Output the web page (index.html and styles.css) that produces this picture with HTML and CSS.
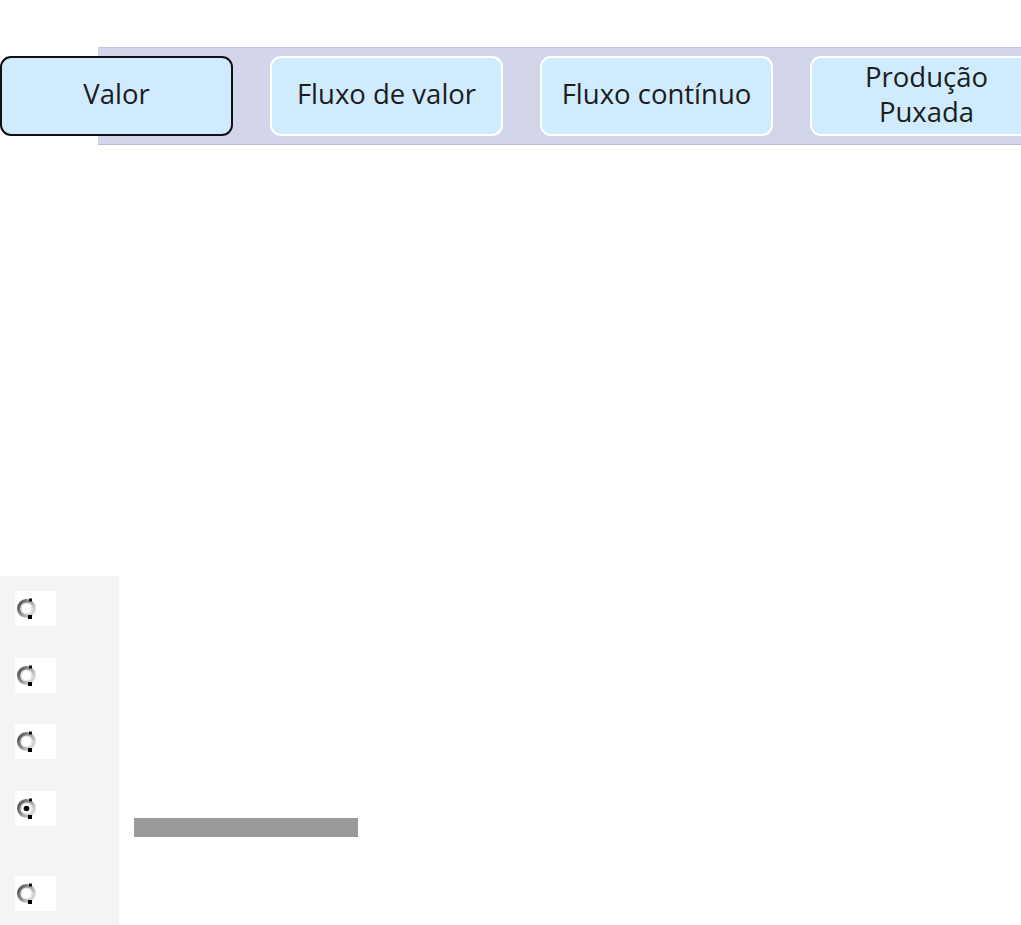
FILE: index.html
```html
<!DOCTYPE html>
<html lang="pt">
<head>
<meta charset="utf-8">
<title>Lean</title>
<link rel="stylesheet" href="styles.css">
</head>
<body>
<div class="page">
  <div class="band-wrap">
    <div class="band">
      <div class="steps">
        <div class="step step-active">Valor</div>
        <div class="step">Fluxo de valor</div>
        <div class="step">Fluxo contínuo</div>
        <div class="step">Produção<br>Puxada</div>
      </div>
    </div>
  </div>

  <div class="options">
    <div class="opt">
      <div class="opt-radio"><span class="radio-box"><svg class="radio" viewBox="0 0 20 21" width="20" height="21"><defs><linearGradient id="g1" x1="0" y1="0.2" x2="1" y2="0.8"><stop offset="0" stop-color="#555"/><stop offset="0.45" stop-color="#999"/><stop offset="1" stop-color="#e2e2e2"/></linearGradient></defs><circle cx="9.5" cy="10.5" r="7.8" fill="#fff" stroke="url(#g1)" stroke-width="3.4"/><circle cx="9.5" cy="10.5" r="5.2" fill="none" stroke="#ddd" stroke-width="1"/><rect x="12" y="0.5" width="3" height="3" fill="#111"/><rect x="11" y="17" width="4" height="4" fill="#000"/></svg></span></div>
      <div class="opt-label"></div>
    </div>
    <div class="opt">
      <div class="opt-radio"><span class="radio-box"><svg class="radio" viewBox="0 0 20 21" width="20" height="21"><circle cx="9.5" cy="10.5" r="7.8" fill="#fff" stroke="url(#g1)" stroke-width="3.4"/><circle cx="9.5" cy="10.5" r="5.2" fill="none" stroke="#ddd" stroke-width="1"/><rect x="12" y="0.5" width="3" height="3" fill="#111"/><rect x="11" y="17" width="4" height="4" fill="#000"/></svg></span></div>
      <div class="opt-label"></div>
    </div>
    <div class="opt">
      <div class="opt-radio"><span class="radio-box"><svg class="radio" viewBox="0 0 20 21" width="20" height="21"><circle cx="9.5" cy="10.5" r="7.8" fill="#fff" stroke="url(#g1)" stroke-width="3.4"/><circle cx="9.5" cy="10.5" r="5.2" fill="none" stroke="#ddd" stroke-width="1"/><rect x="12" y="0.5" width="3" height="3" fill="#111"/><rect x="11" y="17" width="4" height="4" fill="#000"/></svg></span></div>
      <div class="opt-label"></div>
    </div>
    <div class="opt opt-tall">
      <div class="opt-radio"><span class="radio-box"><svg class="radio" viewBox="0 0 20 21" width="20" height="21"><circle cx="9.5" cy="10.5" r="7.8" fill="#fff" stroke="url(#g1)" stroke-width="3.4"/><circle cx="9.5" cy="10.5" r="5.2" fill="none" stroke="#ddd" stroke-width="1"/><circle cx="9.5" cy="10.5" r="2.8" fill="#000"/><rect x="12" y="0.5" width="3" height="3" fill="#111"/><rect x="11" y="17" width="4" height="4" fill="#000"/></svg></span></div>
      <div class="opt-label"><div class="answer-bar"></div></div>
    </div>
    <div class="opt">
      <div class="opt-radio"><span class="radio-box"><svg class="radio" viewBox="0 0 20 21" width="20" height="21"><circle cx="9.5" cy="10.5" r="7.8" fill="#fff" stroke="url(#g1)" stroke-width="3.4"/><circle cx="9.5" cy="10.5" r="5.2" fill="none" stroke="#ddd" stroke-width="1"/><rect x="12" y="0.5" width="3" height="3" fill="#111"/><rect x="11" y="17" width="4" height="4" fill="#000"/></svg></span></div>
      <div class="opt-label"></div>
    </div>
  </div>
</div>
</body>
</html>
```

FILE: styles.css
```css
html, body {
  margin: 0;
  padding: 0;
  background: #fff;
  overflow: hidden;
}
.page {
  width: 1021px;
  height: 925px;
  overflow: hidden;
  font-family: "Open Sans", "Liberation Sans", sans-serif;
}
.band-wrap {
  padding-top: 47px;
  padding-left: 98px;
}
.band {
  background: #d3d6ea;
  border-top: 1px solid #c3c6d6;
  border-bottom: 1px solid #b9bccb;
  height: 98px;
  box-sizing: border-box;
  width: 1100px;
}
.steps {
  display: flex;
  gap: 37px;
  margin-left: -98px;
  padding-top: 8px;
}
.step {
  flex: 0 0 233px;
  height: 80px;
  box-sizing: border-box;
  background: #cfebfd;
  border: 2px solid #fff;
  border-radius: 11px;
  padding-bottom: 5px;
  display: flex;
  align-items: center;
  justify-content: center;
  text-align: center;
  font-size: 27.5px;
  line-height: 35px;
  color: #1c1c1c;
}
.step-active {
  border-color: #111;
}
.options {
  margin-top: 431px;
  display: flex;
  flex-direction: column;
}
.opt {
  display: flex;
  height: 67px;
}
.opt:nth-child(2) {
  height: 66px;
}
.opt-tall {
  height: 85px;
}
.opt-radio {
  width: 119px;
  flex: 0 0 119px;
  background: #f4f4f4;
  padding: 15px 0 0 15px;
  box-sizing: border-box;
}
.radio-box {
  display: flex;
  width: 41px;
  height: 35px;
  background: #fff;
  padding: 7px 0 0 2px;
  box-sizing: border-box;
}
.radio {
  display: block;
}
.opt-label {
  flex: 1;
  padding-left: 15px;
}
.answer-bar {
  margin-top: 42px;
  width: 224px;
  height: 19px;
  background: #9a9a9a;
}
```
